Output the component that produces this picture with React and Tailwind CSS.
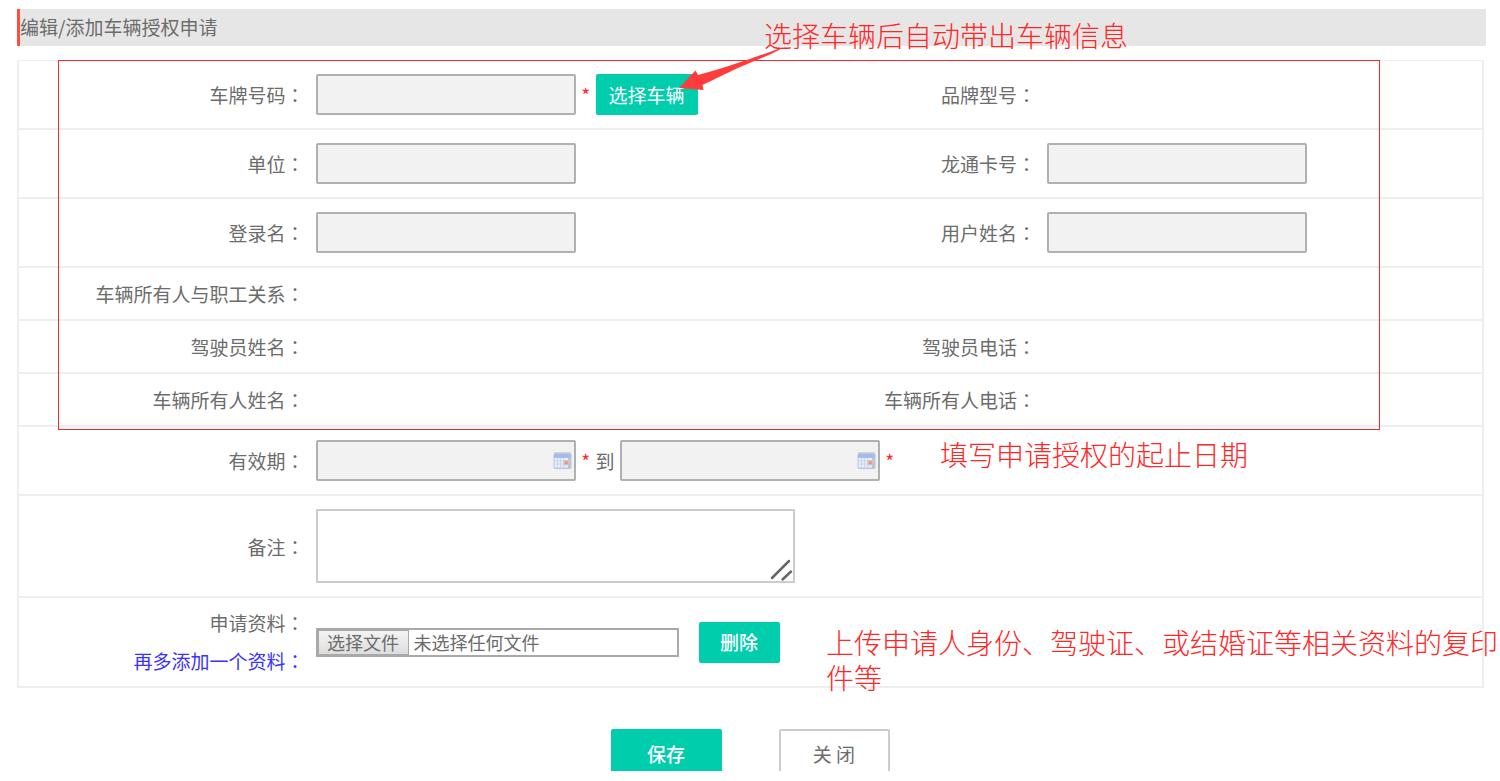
import React, { useState } from "react";

const inputClass =
  "w-[260px] h-[41px] px-2 border-2 border-[#b0b0b0] rounded-xs bg-[#f2f2f2] outline-none";

const Label = ({ htmlFor, children }) => (
  <label htmlFor={htmlFor} className="block pr-[7px] text-right">
    {children}
    <span className="font-['Noto_Sans_CJK_TC',sans-serif]">：</span>
  </label>
);

const Field = ({ id, label, readOnlyText, children }) => (
  <>
    <Label htmlFor={readOnlyText ? undefined : id}>{label}</Label>
    <div className="flex items-center pl-1">
      {children || (!readOnlyText && <input id={id} type="text" className={inputClass} readOnly />)}
    </div>
  </>
);

const Star = () => <span className="w-5 text-center text-[#ff2a2a]">*</span>;

const Note = ({ className, children }) => (
  <p
    className={`absolute text-[28px] leading-[35px] font-light text-[#ff2626] ${className}`}
  >
    {children}
  </p>
);

const CalendarIcon = () => (
  <svg
    className="absolute right-1 top-3 pointer-events-none"
    width="19"
    height="18"
    viewBox="0 0 19 18"
  >
    <rect x="1" y="0" width="17" height="3" rx="1" fill="#d2d2d2" />
    <rect x="0.5" y="1.5" width="18" height="15.5" rx="1.5" fill="#b4c6e3" />
    <rect x="1" y="2" width="17" height="4" fill="#a2bdeb" />
    <rect x="1.5" y="6" width="13.5" height="9.5" fill="#e9f0fa" />
    <path
      d="M4.5 6v9.5M7.5 6v9.5M10.5 6v9.5M1.5 9h13.5M1.5 12h13.5"
      stroke="#c5d6ee"
      strokeWidth="1"
    />
    <rect x="10.500" y="8" width="5.500" height="5.500" rx="1" fill="#f4b8a6" />
    <rect x="12" y="9.500" width="2.500" height="2.500" fill="#ec9075" />
  </svg>
);

const DateInput = ({ id, label }) => (
  <div className="relative">
    <input id={id} type="text" aria-label={label} className={inputClass} readOnly />
    <CalendarIcon />
  </div>
);

const App = () => {
  const [remark, setRemark] = useState("");
  const [fileName, setFileName] = useState("");

  const row = "grid grid-cols-[20%_30%_20%_30%] items-center border-b-2 border-[#eeeeee]";
  const wideRow = "grid grid-cols-[20%_80%] items-center border-b-2 border-[#eeeeee]";

  return (
    <div className="overflow-x-hidden bg-white pt-[9px] text-[19px] leading-[27px] text-[#6c6c6c] font-['Noto_Sans_CJK_SC',sans-serif]">
      <h1 className="ml-[17px] mr-[14px] h-[37px] border-l-3 border-[#ff4d40] bg-[#e6e6e6] leading-9">
        编辑/添加车辆授权申请
      </h1>

      <form onSubmit={(e) => e.preventDefault()}>
        <div className="relative mt-[14px] ml-[17px] mr-4 border-x-2 border-t border-[#eeeeee]">
          <div className={`${row} py-[13px]`}>
            <Field id="plate" label="车牌号码">
              <input id="plate" type="text" className={inputClass} readOnly />
              <Star />
              <button type="button" className="h-[41px] rounded-xs bg-[#00cdac] px-[13px] text-white">
                选择车辆
              </button>
            </Field>
            <Field label="品牌型号" readOnlyText />
          </div>
          <div className={`${row} py-[13px]`}>
            <Field id="unit" label="单位" />
            <Field id="card" label="龙通卡号" />
          </div>
          <div className={`${row} py-[13px]`}>
            <Field id="login" label="登录名" />
            <Field id="username" label="用户姓名" />
          </div>
          <div className={`${row} py-3`}>
            <Field label="车辆所有人与职工关系" readOnlyText />
          </div>
          <div className={`${row} py-3`}>
            <Field label="驾驶员姓名" readOnlyText />
            <Field label="驾驶员电话" readOnlyText />
          </div>
          <div className={`${row} py-3`}>
            <Field label="车辆所有人姓名" readOnlyText />
            <Field label="车辆所有人电话" readOnlyText />
          </div>
          <div className={`${wideRow} py-[13px]`}>
            <Field id="start" label="有效期">
              <DateInput id="start" />
              <Star />
              <span className="w-6">到</span>
              <DateInput id="end" label="到" />
              <Star />
            </Field>
          </div>
          <div className={`${wideRow} py-[13px]`}>
            <Field id="remark" label="备注">
              <div className="relative">
                <textarea
                  id="remark"
                  value={remark}
                  onChange={(e) => setRemark(e.target.value)}
                  className="block h-[74px] w-[479px] resize-none border-2 border-[#cccccc] p-2 outline-none"
                />
                <svg
                  className="absolute right-0 bottom-0 pointer-events-none"
                  width="26"
                  height="26"
                  viewBox="0 0 26 26"
                  stroke="#666666"
                  strokeWidth="2.5"
                  strokeLinecap="round"
                >
                  <path d="M3 21L20 4M13.5 22.5L22 14.5" />
                </svg>
              </div>
            </Field>
          </div>
          <div className={`${wideRow} py-[6px] leading-[38px]`}>
            <div>
              <Label htmlFor="file">申请资料</Label>
              <a href="#more" className="block pr-[7px] text-right text-[#3a32ff]">
                再多添加一个资料
                <span className="font-['Noto_Sans_CJK_TC',sans-serif]">：</span>
              </a>
            </div>
            <div className="flex items-center pl-1">
              <div className="relative flex h-[29px] w-[363px] items-center border-2 border-[#a9a9a9] text-lg leading-6">
                <input
                  id="file"
                  type="file"
                  className="sr-only"
                  onChange={(e) => setFileName(e.target.files[0]?.name || "")}
                />
                <label
                  htmlFor="file"
                  className="flex h-full w-[91px] items-center justify-center border border-[#a9a9a9] bg-linear-to-b from-[#f4f4f4] to-[#dddddd]"
                >
                  选择文件
                </label>
                <span className="pl-[5px]">{fileName || "未选择任何文件"}</span>
              </div>
              <button
                type="button"
                onClick={() => setFileName("")}
                className="ml-5 h-[41px] w-[81px] rounded-xs bg-[#00cdac] font-medium text-white"
              >
                删除
              </button>
            </div>
          </div>

          {/* Marked area and red notes over the form */}
          <div className="absolute -top-px left-[39px] right-[102px] h-[370px] border border-[#ff2626] pointer-events-none" />
          <Note className="-top-[43px] left-[745px]">选择车辆后自动带出车辆信息</Note>
          <svg
            className="absolute -top-4 left-[660px] pointer-events-none"
            width="112"
            height="46"
            viewBox="0 0 112 46"
            fill="#ff3b3b"
          >
            <path d="M0 43L16.5 25.5L19 30C44 23.500 68 15 105 2C96 8 78 15 60 22.500C46 29 36 34 23.500 40L24.500 45Z" />
          </svg>
          <Note className="top-[376px] left-[921px]">填写申请授权的起止日期</Note>
          <Note className="top-[564px] left-[807px] w-[673px]">
            上传申请人身份、驾驶证、或结婚证等相关资料的复印件等
          </Note>
        </div>

        <div className="mt-[41px] flex h-[42px] justify-center gap-[57px] overflow-hidden">
          <button type="submit" className="h-12 w-[111px] rounded-xs bg-[#00cdac] font-medium text-white">
            保存
          </button>
          <button type="button" className="h-12 w-[111px] rounded-xs border-2 border-[#cccccc] bg-white">
            关 闭
          </button>
        </div>
      </form>
    </div>
  );
};

export default App;
